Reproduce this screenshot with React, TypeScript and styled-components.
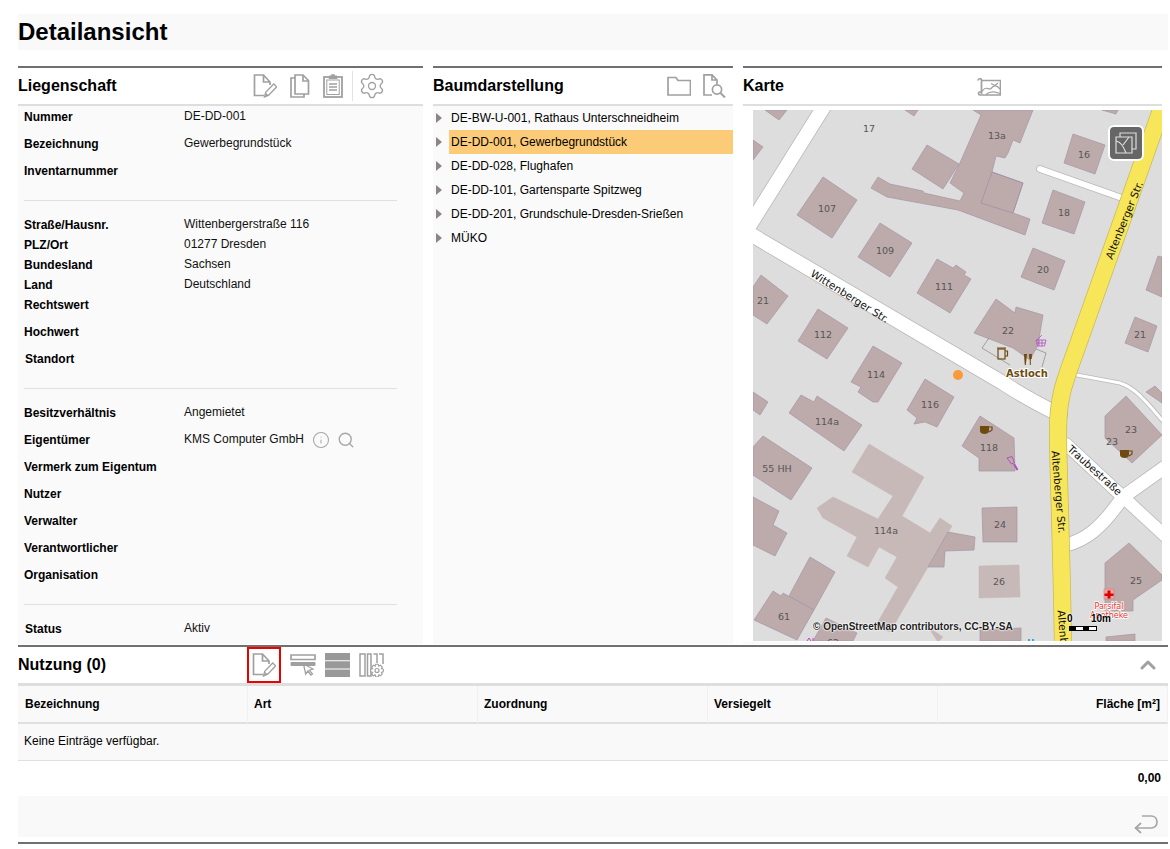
import React from "react";
import styled, { createGlobalStyle } from "styled-components";
import { ChevronUp, Info, Search, Settings } from "lucide-react";

const Global = createGlobalStyle`
  html, body { margin: 0; padding: 0; background: #fff; }
  body { font-family: "Liberation Sans", Arial, sans-serif; color: #000; overflow: hidden; }
  * { box-sizing: border-box; }
`;

const Page = styled.div`
  width: 1170px; height: 849px; padding: 14px 0 0 18px; overflow: hidden;
`;
const TitleBar = styled.header`
  width: 1150px; height: 36px; background: #f9f9f9; display: flex; align-items: center;
`;
const PageTitle = styled.h1`
  margin: 0; font-size: 24px; font-weight: 700; line-height: 36px;
`;
const Columns = styled.div`
  display: grid; grid-template-columns: 405px 300px 419px; column-gap: 10px;
  margin-top: 16px; height: 579px;
`;
const Panel = styled.section`
  border-top: 2px solid #707070; display: flex; flex-direction: column; min-height: 0; height: 578px;
`;
const PanelHead = styled.div`
  height: 38px; border-bottom: 2px solid #dedede; display: flex; align-items: center;
  flex: none; position: relative;
`;
const PanelTitle = styled.h2<{ $w: number }>`
  margin: 0; font-size: 16px; font-weight: 700; width: ${p => p.$w}px; flex: none;
`;
const IconRow = styled.div<{ $gap?: number; $shift?: number }>`
  display: flex; align-items: center; gap: ${p => p.$gap ?? 12}px; color: #a0a0a0;
  margin-left: ${p => p.$shift ?? 0}px;
`;
const Sep = styled.span`
  width: 1px; height: 30px; background: #e2e2e2; margin: 0 -8px 0 -4px;
`;
const FormBody = styled.div`
  background: #fafafa; flex: 1; overflow: hidden; padding: 1px 6px 0;
`;
const Row = styled.div<{ $h: number }>`
  height: ${p => p.$h}px; display: flex; font-size: 12px; line-height: 20px;
`;
const Label = styled.div<{ $nudge?: number }>`
  width: 160px; font-weight: 700; flex: none; padding-left: ${p => p.$nudge ?? 0}px;
`;
const Value = styled.div`
  display: flex; align-items: flex-start; margin-top: -1px; color: #111;
`;
const Divider = styled.hr`
  border: 0; border-top: 1px solid #e0e0e0; margin: 12px 26px 14px 0; height: 1px; width: 373px;
`;
const InlineIcons = styled.span`
  display: inline-flex; gap: 7px; margin-left: 8px; color: #a6a6a6; position: relative; top: 2px;
`;
const TreeBody = styled.div`
  background: #fafafa; flex: 1; overflow: hidden;
`;
const TreeRow = styled.div`
  height: 24px; display: flex; align-items: center; font-size: 12px;
`;
const Caret = styled.span`
  width: 0; height: 0; border-left: 6px solid #8c8585; border-top: 5px solid transparent;
  border-bottom: 5px solid transparent; margin: -1px 9px 0 3px; flex: none;
`;
const TreeLabel = styled.div<{ $on?: boolean }>`
  flex: 1; height: 24px; line-height: 24px; padding-left: 2px; margin-left: -2px;
  background: ${p => (p.$on ? "#fbcb78" : "transparent")};
`;
const MapBody = styled.div`
  flex: 1; padding: 4px 0 3px 10px; background: #fff; position: relative; overflow: hidden;
  border-bottom: 2px solid #fafafa;
`;
const MapFrame = styled.div`
  position: relative; width: 409px; height: 531px; overflow: hidden; background: #ddd;
`;
const MapSvg = styled.svg`
  display: block; width: 409px; height: 531px;
`;
const MapButton = styled.button`
  position: absolute; top: 15px; right: 18px; width: 36px; height: 36px; padding: 0;
  background: #666; border: 2px solid #fff; border-radius: 6px;
  display: flex; align-items: center; justify-content: center;
`;
const Attribution = styled.div`
  position: absolute; left: 60px; bottom: 8px; font-size: 10px; font-weight: 700; color: #222;
  line-height: 12px; white-space: nowrap;
  text-shadow: 0 0 2px #fff, 0 0 2px #fff, 0 0 2px #fff;
`;
const Scale = styled.div`
  position: absolute; left: 314px; bottom: 10px; width: 30px; height: 18px;
  font-size: 10px; font-weight: 700; line-height: 11px; color: #000;
  display: flex; justify-content: space-between; flex-wrap: wrap;
  text-shadow: 0 0 2px #fff, 0 0 2px #fff;
`;
const ScaleBar = styled.div`
  width: 28px; height: 5px; margin: 1px 0 0 2px; border: 1px solid #000; flex: none;
  background: linear-gradient(90deg, #000 25%, #fff 25%, #fff 50%, #000 50%, #000 75%, #fff 75%);
`;
const ScaleEnd = styled.span`
  margin-right: -14px;
`;
const Bottom = styled.section`
  width: 1150px; border-top: 2px solid #707070;
`;
const BottomHead = styled.div`
  height: 39px; border-bottom: 3px solid #dedede; display: flex; align-items: center; padding-right: 8px;
`;
const ActionIcon = styled.span<{ $active?: boolean }>`
  width: 34px; height: 36px; display: flex; align-items: center; justify-content: center;
  color: #a0a0a0;
  border: 2px solid ${p => (p.$active ? "#ee0000" : "transparent")};
`;
const Collapse = styled.span`
  margin-left: auto; color: #a0a0a0; display: flex;
`;
const Table = styled.table`
  width: 1150px; border-collapse: separate; border-spacing: 0; table-layout: fixed; font-size: 12px;
`;
const Th = styled.th<{ $right?: boolean; $first?: boolean }>`
  width: 230px; height: 38px; padding: 0 7px 1px ${p => (p.$first ? 7 : 6)}px; background: #f9f9f9; font-weight: 700;
  text-align: ${p => (p.$right ? "right" : "left")};
  border-right: 1px solid #f1f1f1; border-bottom: 2px solid #e0e0e0;
`;
const EmptyCell = styled.td`
  height: 37px; padding: 0 6px 2px; background: #f9f9f9; border-bottom: 1px solid #e0e0e0;
`;
const TotalCell = styled.td`
  height: 35px; padding: 0 7px 2px; text-align: right; font-weight: 700;
`;
const ActionBar = styled.div`
  height: 41px; background: #f9f9f9; display: flex; justify-content: flex-end; align-items: flex-end;
  padding: 0 10px 3px 0; color: #a6a6a6;
`;
const BottomRule = styled.div`
  border-top: 2px solid #707070; margin-top: 5px;
`;

const G = { fill: "none", stroke: "currentColor", strokeWidth: 1.7 } as const;

const EditDoc = () => (
  <svg width="24" height="24" viewBox="0 0 24 24" {...G}>
    <path d="M11 21.500H1.500V1H10.500L17 8V11M10.500 1V8H17" />
    <path d="M11.500 23l1.200-4.600 8-8.400 3 2.800-8 8.400z" strokeWidth="1.300" />
    <path d="M12 22.600l1-3.600 3 2.600z" fill="currentColor" stroke="none" />
  </svg>
);
const CopyDoc = () => (
  <svg width="20" height="24" viewBox="0 0 20 24" {...G}>
    <path d="M5 20V1H13L18.500 6.500V20zM13 1V7H18.500" />
    <path d="M5 4H1V23H14V20" />
  </svg>
);
const Clipboard = () => (
  <svg width="20" height="24" viewBox="0 0 20 24" {...G}>
    <rect x="1" y="3" width="18" height="20" strokeWidth="1.800" />
    <rect x="3.800" y="6" width="12.400" height="14.500" strokeWidth="1" />
    <path d="M6 3.500V2h2.500V.8h3V2H14v2.500H6z" fill="currentColor" strokeWidth="1" />
    <path d="M6 10h8M6 13h8M6 16h8" strokeWidth="1.300" />
  </svg>
);
const Folder = () => (
  <svg width="24" height="20" viewBox="0 0 24 20" {...G}>
    <path d="M1 19V1.500H9L11 4.500H23.500V19z" />
  </svg>
);
const DocSearch = () => (
  <svg width="23" height="24" viewBox="0 0 23 24" {...G}>
    <path d="M9 21H1V.8H9L14 6V10M9 .8V6H14" />
    <circle cx="14" cy="15.500" r="4.600" />
    <path d="M17.500 19l4.500 4.500" strokeWidth="2" />
  </svg>
);
const MapIcon = () => (
  <svg width="24" height="19" viewBox="0 0 24 19" {...G}>
    <path d="M1 3.500C1 1.500 4.500 1 4.500 3V17" />
    <path d="M4.500 3.500H23.500V18H3C1 18 1 15 3 15H4.500" />
    <path d="M5 14.500C9 7.500 12 14 14 11.500S19 7 23 12M9 17.500C13 14 17 14 23 16.500" strokeWidth="1.300" />
    <path d="M14 6.500l4 2 3-2.500" strokeWidth="1.300" />
  </svg>
);
const ListSelect = () => (
  <svg width="26" height="22" viewBox="0 0 26 22" {...G}>
    <path d="M1 1H25V5.500H1z" />
    <path d="M1 8.500H25V11.500H1z" fill="currentColor" strokeWidth="1" />
    <path d="M13.500 10L23 15l-3.800 1.200 3.300 3.600-1.600 1.200-3.200-3.900-2 3z" fill="#fff" strokeWidth="1.300" />
  </svg>
);
const RowsIcon = () => (
  <svg width="25" height="24" viewBox="0 0 25 24">
    <path d="M0 0H25V7.300H0zM0 8.300H25V15.500H0zM0 16.500H25V24H0z" fill="#999" />
  </svg>
);
const ColumnsGear = () => (
  <svg width="25" height="24" viewBox="0 0 25 24" {...G}>
    <path d="M1 1H6V23H1zM8.500 1H12V23H8.500zM14.500 1H18V10M20 1H24V11" strokeWidth="1.500" />
    <path d="M14 23V21" strokeWidth="1.500" />
    <path d="M16.700 11.200h2.600l.5 1.900 1.700-.9 1.800 1.800-.9 1.700 1.900.5v2.600l-1.900.5.9 1.700-1.800 1.800-1.700-.9-.5 1.900h-2.600l-.5-1.900-1.700.9-1.800-1.800.9-1.700-1.900-.5v-2.600l1.900-.5-.9-1.700 1.800-1.800 1.700.9z" fill="#fff" strokeWidth="1.100" />
    <circle cx="18" cy="17.500" r="2" strokeWidth="1.200" />
  </svg>
);
const ReturnIcon = () => (
  <svg width="24" height="19" viewBox="0 0 24 19" {...G}>
    <path d="M8 1H17C25 1 25 13 17 13H2M7 8L1.500 13 7 18" />
  </svg>
);
const MapLayers = () => (
  <svg width="22" height="22" viewBox="0 0 22 22" fill="none" stroke="#ddd" strokeWidth="1.200">
    <path d="M5 5V1H21V17H17" />
    <path d="M1 5H17V21H1z" />
    <path d="M1 9C6 10 8 14 11 21M8 13L14 5" />
  </svg>
);

type Pt = string;
const buildings: Pt[] = [
  "823,177 857,200 832,238 797,215", "880,223 912,243 890,277 858,257",
  "937,259 953,268 956,265 966,272 964,275 971,279 950,313 917,293",
  "1033,248 1065,261 1054,290 1021,277", "1053,190 1085,202 1074,234 1042,223",
  "1073,134 1105,145 1095,174 1064,163",
  "973,110 1033,110 1027,125 1020,143 1013,140 1008,153 1005,158 996,156 992,172 1023,183 1013,213 1030,219 1025,235 958,210 887,197 871,188 878,177 890,184 923,191 924,193 960,201 964,193 950,183 959,165 981,115",
  "927,145 959,164 943,189 912,169", "765,110 787,110 779,120", "905,110 918,110 914,116", "1102,110 1118,110 1116,114",
  "753,140 763,147 753,160", "753,287 761,275 788,296 767,324 753,315", "818,309 848,328 827,359 798,341",
  "873,346 902,363 878,402 873,402 858,392 861,387 851,382",
  "925,379 954,397 937,427 925,422 914,424 917,418 907,410",
  "801,395 814,402 817,396 862,425 844,451 789,413", "753,392 768,402 760,415 753,410",
  "763,436 812,468 791,500 753,475 753,447", "753,497 779,511 773,525 787,533 775,556 753,545",
  "980,416 1014,438 1015,471 979,471 979,458 962,446", "982,508 1017,507 1017,542 983,542",
  "948,532 975,537 974,550 945,551 944,567 928,567",
  "810,557 835,572 814,610 789,596", "773,591 781,596 783,593 814,610 797,640 754,620",
  "826,618 857,633 853,641 813,641", "980,641 980,630 1021,628 1021,641", "1106,637 1135,634 1135,641 1106,641",
  "1126,396 1162,435 1132,463 1105,438 1105,416", "1129,543 1162,575 1162,580 1133,600 1133,611 1105,611 1105,563",
  "1158,256 1162,257 1162,297 1146,290", "1135,317 1157,326 1148,352 1125,343", "1155,386 1162,393 1162,403 1146,392",
  "996,299 1015,313 1016,307 1043,315 1038,345 1030,360 1013,348 974,333",
];
const lightBuildings: Pt[] = [
  "869,444 924,477 902,516 930,533 940,518 952,526 890,632 875,627 898,587 885,578 897,557 879,547 868,567 847,556 857,537 823,518 817,508 833,497 878,519 893,496 852,472",
  "979,566 1019,565 1020,597 979,598", "928,627 943,637 938,642",
];
const labels: [string, number, number][] = [
  ["17", 869, 128], ["13a", 997, 135], ["16", 1084, 154], ["107", 827, 208], ["18", 1064, 212], ["109", 885, 250],
  ["20", 1043, 269], ["111", 944, 286], ["21", 763, 300], ["112", 823, 334], ["22", 1008, 330], ["21", 1140, 334],
  ["114", 876, 374], ["116", 930, 404], ["114a", 827, 421], ["118", 989, 447], ["23", 1131, 429], ["23", 1112, 441],
  ["55 HH", 777, 468], ["114a", 886, 530], ["24", 1000, 524], ["26", 999, 581], ["25", 1136, 580], ["61", 784, 616], ["62", 833, 642],
];
const roadLabels: [string, number, number, number][] = [
  ["Wittenberger Str.", 850, 296, 32], ["Altenberger Str.", 1124, 220, -68],
  ["Altenberger Str.", 1059, 492, 85], ["Traubestraße", 1095, 470, 42], ["Altenb", 1063, 627, 85],
];
const roads: [string, number][] = [
  ["M828 100L750 225", 14],
  ["M745 231L1003 383C1020 394 1040 405 1060 415", 14],
  ["M1040 169L1122 198", 6],
  ["M1066 444L1123 497L1175 545", 12],
  ["M1066 545C1085 540 1100 530 1123 497L1175 460", 13],
  ["M1077 375L1120 383C1135 388 1145 400 1162 420", 3],
];
const yellow = "M1170 85L1076 350C1066 378 1058 395 1058 430C1058 470 1061 520 1063 645";
const cup = (x: number, y: number) => (
  <g key={`${x}`} fill="#6f4a10">
    <path d={`M${x - 5} ${y - 5}h9v5c0 4-9 4-9 0z`} />
    <path d={`M${x + 4} ${y - 4}h3v3l-3 2`} fill="none" stroke="#6f4a10" strokeWidth="1.200" />
  </g>
);

const MapDrawing = () => (
  <MapSvg viewBox="753 110 409 531">
    <rect x="753" y="110" width="409" height="531" fill="#ddd" />
    {roads.map(([d, w], i) => (
      <path key={`c${i}`} d={d} fill="none" stroke="#b9b9b9" strokeWidth={w + 1.6} strokeLinecap="round" />
    ))}
    {roads.map(([d, w], i) => (
      <path key={`r${i}`} d={d} fill="none" stroke="#fff" strokeWidth={w} strokeLinecap="round" />
    ))}
    {lightBuildings.map((p, i) => <polygon key={i} points={p} fill="#c8b9b9" stroke="#c4b4b4" strokeWidth=".5" />)}
    {buildings.map((p, i) => <polygon key={i} points={p} fill="#bdabab" stroke="#a493a6" strokeWidth=".7" />)}
    <path d="M992 172L1023 183L1013 213L981 203Z" fill="none" stroke="#9c8ba8" strokeWidth=".7" />
    <path d="M989 338L982 348L1010 365M1036 349L1046 353L1042 367" fill="none" stroke="#777" strokeWidth=".6" />
    <path d={yellow} fill="none" stroke="#c9b95a" strokeWidth="18" />
    <path d={yellow} fill="none" stroke="#f8e65a" strokeWidth="16.500" />
    {labels.map(([t, x, y], i) => (
      <text key={i} x={x} y={y} textAnchor="middle" dominantBaseline="central" fontFamily="DejaVu Sans" fontSize="9.500" fill="#555">{t}</text>
    ))}
    {roadLabels.map(([t, x, y, r], i) => (
      <text key={i} x={x} y={y} transform={`rotate(${r} ${x} ${y})`} textAnchor="middle" dominantBaseline="central" fontFamily="DejaVu Sans" fontSize="10.500" fill="#111">{t}</text>
    ))}
    <circle cx="958" cy="375" r="5" fill="#f99a3c" />
    <g fill="none" stroke="#6f4a10" strokeWidth="1.200">
      <rect x="998" y="349" width="7" height="10" />
      <path d="M1005 351h2.500v5h-2.500M997 348h9" />
    </g>
    <path d="M1024 354h3l-.5 5-.7 6h-1l-.5-6zM1029 354h3l-.3 5h-.9v6h-1v-6h-.6z" fill="#6f4a10" />
    <text x="1027" y="377" textAnchor="middle" fontFamily="DejaVu Sans" fontWeight="700" fontSize="10" fill="#6f4a10" stroke="#fff" strokeWidth="2" paintOrder="stroke">Astloch</text>
    <path d="M1036 340h10l-1.500 6h-7zM1037 340l5-5M1037 343h8M1039 340v6M1042 340v6" fill="none" stroke="#b04fc0" strokeWidth=".8" />
    {cup(985, 431)}
    {cup(1125, 455)}
    <path d="M1007 458l5-1.500 2.500 6-3 1.500z" fill="none" stroke="#b04fc0" strokeWidth="1" />
    <path d="M1014 464l3.500 6" stroke="#b04fc0" strokeWidth="2" />
    <rect x="1104" y="589" width="10" height="10" fill="#e9a8a8" stroke="#e66" strokeWidth=".5" />
    <path d="M1107.500 590.500h3v3h3v2.500h-3v2.500h-3v-2.500h-3v-2.500h3z" fill="#dd0000" />
    <text x="1109" y="609" textAnchor="middle" fontFamily="DejaVu Sans" fontSize="8" fill="#e8342c" stroke="#fff" strokeWidth="1.500" paintOrder="stroke">Parsifal</text>
    <text x="1109" y="618" textAnchor="middle" fontFamily="DejaVu Sans" fontSize="8" fill="#e8342c" stroke="#fff" strokeWidth="1.500" paintOrder="stroke">Apotheke</text>
    <path d="M807 641l2-3 2 3M813 641v-3" stroke="#c040c0" fill="none" />
    <path d="M1028 640h2M1032 640h2" stroke="#3aa5e0" strokeWidth="2" />
  </MapSvg>
);

const f1: [string, string][] = [["Nummer", "DE-DD-001"], ["Bezeichnung", "Gewerbegrundstück"], ["Inventarnummer", ""]];
const f2: [string, string, number, number][] = [
  ["Straße/Hausnr.", "Wittenbergerstraße 116", 20, 0], ["PLZ/Ort", "01277 Dresden", 20, 0], ["Bundesland", "Sachsen", 20, 0],
  ["Land", "Deutschland", 20, 0], ["Rechtswert", "", 27, 0], ["Hochwert", "", 27, 0], ["Standort", "", 27, 1],
];
const f3 = ["Vermerk zum Eigentum", "Nutzer", "Verwalter", "Verantwortlicher", "Organisation"];
const tree = [
  "DE-BW-U-001, Rathaus Unterschneidheim", "DE-DD-001, Gewerbegrundstück", "DE-DD-028, Flughafen",
  "DE-DD-101, Gartensparte Spitzweg", "DE-DD-201, Grundschule-Dresden-Srießen", "MÜKO",
];

export default function App() {
  return (
    <Page>
      <Global />
      <TitleBar><PageTitle>Detailansicht</PageTitle></TitleBar>
      <Columns>
        <Panel>
          <PanelHead>
            <PanelTitle $w={235}>Liegenschaft</PanelTitle>
            <IconRow $gap={13}>
              <EditDoc /><CopyDoc /><Clipboard /><Sep /><Settings size={28} strokeWidth={1.15} />
            </IconRow>
          </PanelHead>
          <FormBody>
            {f1.map(([l, v]) => <Row key={l} $h={27}><Label>{l}</Label><Value>{v}</Value></Row>)}
            <Divider />
            {f2.map(([l, v, h, n]) => <Row key={l} $h={h}><Label $nudge={n}>{l}</Label><Value>{v}</Value></Row>)}
            <Divider />
            <Row $h={27}><Label>Besitzverhältnis</Label><Value>Angemietet</Value></Row>
            <Row $h={27}>
              <Label>Eigentümer</Label>
              <Value>
                KMS Computer GmbH
                <InlineIcons><Info size={18} strokeWidth={1.4} /><Search size={18} strokeWidth={1.8} /></InlineIcons>
              </Value>
            </Row>
            {f3.map(l => <Row key={l} $h={27}><Label>{l}</Label></Row>)}
            <Divider />
            <Row $h={27}><Label $nudge={1}>Status</Label><Value>Aktiv</Value></Row>
          </FormBody>
        </Panel>
        <Panel>
          <PanelHead>
            <PanelTitle $w={234}>Baumdarstellung</PanelTitle>
            <IconRow $gap={12}><Folder /><DocSearch /></IconRow>
          </PanelHead>
          <TreeBody>
            {tree.map((t, i) => (
              <TreeRow key={t}><Caret /><TreeLabel $on={i === 1}>{t}</TreeLabel></TreeRow>
            ))}
          </TreeBody>
        </Panel>
        <Panel>
          <PanelHead>
            <PanelTitle $w={234}>Karte</PanelTitle>
            <IconRow><MapIcon /></IconRow>
          </PanelHead>
          <MapBody>
            <MapFrame>
              <MapDrawing />
              <MapButton aria-label="Ebenen"><MapLayers /></MapButton>
              <Attribution>© OpenStreetMap contributors, CC-BY-SA</Attribution>
              <Scale><span>0</span><ScaleEnd>10m</ScaleEnd><ScaleBar /></Scale>
            </MapFrame>
          </MapBody>
        </Panel>
      </Columns>
      <Bottom>
        <BottomHead>
          <PanelTitle $w={229}>Nutzung (0)</PanelTitle>
          <ActionIcon $active><EditDoc /></ActionIcon>
          <IconRow $gap={9} $shift={9}><ListSelect /><RowsIcon /><ColumnsGear /></IconRow>
          <Collapse><ChevronUp size={24} strokeWidth={3} /></Collapse>
        </BottomHead>
        <Table>
          <thead>
            <tr>
              <Th $first>Bezeichnung</Th><Th>Art</Th><Th>Zuordnung</Th>
              <Th>Versiegelt</Th><Th $right>Fläche [m²]</Th>
            </tr>
          </thead>
          <tbody>
            <tr><EmptyCell colSpan={5}>Keine Einträge verfügbar.</EmptyCell></tr>
            <tr><TotalCell colSpan={5}>0,00</TotalCell></tr>
          </tbody>
        </Table>
        <ActionBar><ReturnIcon /></ActionBar>
        <BottomRule />
      </Bottom>
    </Page>
  );
}
